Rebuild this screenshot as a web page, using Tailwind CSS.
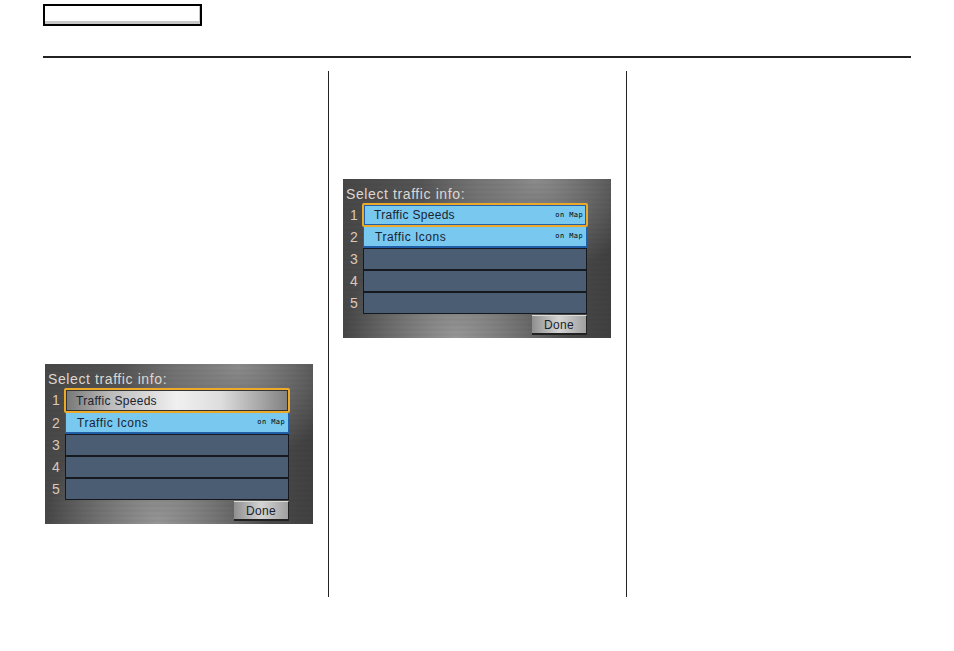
<!DOCTYPE html>
<html lang="en">
  <head>
    <meta charset="UTF-8" />
    <meta name="viewport" content="width=device-width, initial-scale=1.0" />
    <script src="https://cdn.jsdelivr.net/npm/@tailwindcss/browser@4"></script>
    <title>Select traffic info</title>
  </head>

  <body class="bg-white">
    <div class="w-[954px] h-[651px] px-[43px] pt-[4px] overflow-hidden font-['Liberation_Sans',Arial,sans-serif]">
      <div class="w-[159px] h-[22px] border-2 border-black bg-white shadow-[inset_-1px_-3px_0_#c8c8c8]"></div>
      <div class="mt-[30px] w-[868px] h-[2px] bg-[#222]"></div>

      <div class="mt-[13px] flex h-[526px]">
        <!-- left column -->
        <div class="w-[286px] h-full border-r border-[#222] pl-[2px] pt-[293px]">
          <div class="w-[268px] h-[160px] pt-[6px] flex flex-col bg-[repeating-linear-gradient(0deg,#0000_0px,#0000_2px,#0000000c_3px,#0000_5px),radial-gradient(ellipse_at_72%_0%,#8c8c8c_0%,#8c8c8c00_42%),radial-gradient(ellipse_at_42%_100%,#969696_0%,#96969600_50%),linear-gradient(90deg,#474747,#5e5e5e_50%,#404040)]">
            <div class="h-[18px] pl-[3px] text-[#ddd6d0] text-[14px] leading-[18px] tracking-[0.6px]">Select traffic info:</div>
            <div class="ml-[20px] w-[224px] flex flex-col">
              <div class="relative h-[25px] flex items-center">
                <span class="absolute left-[-20px] w-[22px] text-center text-[14px] text-[#dcc8b8]">1</span>
                <div class="h-full w-[226px] -mx-[1px] pl-[10px] flex items-center border-2 border-[#eda928] rounded-[2px] shadow-[inset_0_0_0_1px_#333] bg-[linear-gradient(90deg,#777_0%,#bbb_20%,#f0f0f0_50%,#ddd_70%,#808080_100%)] text-[12px] tracking-[0.3px] text-[#1a2430]">Traffic Speeds</div>
              </div>
              <div class="relative h-[21px] flex items-center">
                <span class="absolute left-[-20px] w-[22px] text-center text-[14px] text-[#dcc8b8]">2</span>
                <div class="h-full w-full pl-[11px] pr-[3px] flex items-center justify-between bg-[#78c8f0] border-x border-b-2 border-[#2160a8] text-[12px] tracking-[0.5px] text-[#1a2430]">Traffic Icons<span class="font-['DejaVu_Sans_Mono',monospace] text-[7px] tracking-[0.4px] text-black">on Map</span></div>
              </div>
              <div class="relative h-[22px] flex items-center">
                <span class="absolute left-[-20px] w-[22px] text-center text-[14px] text-[#dcc8b8]">3</span>
                <div class="h-full w-full bg-[#4a5d73] border border-[#15181c]"></div>
              </div>
              <div class="relative h-[22px] flex items-center">
                <span class="absolute left-[-20px] w-[22px] text-center text-[14px] text-[#dcc8b8]">4</span>
                <div class="h-full w-full bg-[#4a5d73] border border-[#15181c]"></div>
              </div>
              <div class="relative h-[22px] flex items-center">
                <span class="absolute left-[-20px] w-[22px] text-center text-[14px] text-[#dcc8b8]">5</span>
                <div class="h-full w-full bg-[#4a5d73] border border-[#15181c]"></div>
              </div>
            </div>
            <div class="mt-[1px] ml-[189px] w-[55px] h-[20px] flex items-center justify-center bg-[linear-gradient(90deg,#8f8f8f,#d4d4d4_50%,#a0a0a0)] border-t border-t-[#ddd] border-b-2 border-r border-b-[#222] border-r-[#222] text-[12px] tracking-[0.3px] text-[#1a2430]">Done</div>
          </div>
        </div>

        <!-- middle column -->
        <div class="w-[298px] h-full border-r border-[#222] pl-[14px] pt-[108px]">
          <div class="w-[268px] h-[159px] pt-[6px] flex flex-col bg-[repeating-linear-gradient(0deg,#0000_0px,#0000_2px,#0000000c_3px,#0000_5px),radial-gradient(ellipse_at_72%_0%,#8c8c8c_0%,#8c8c8c00_42%),radial-gradient(ellipse_at_42%_100%,#969696_0%,#96969600_50%),linear-gradient(90deg,#474747,#5e5e5e_50%,#404040)]">
            <div class="h-[18px] pl-[3px] text-[#ddd6d0] text-[14px] leading-[18px] tracking-[0.6px]">Select traffic info:</div>
            <div class="ml-[20px] w-[224px] flex flex-col">
              <div class="relative h-[24px] flex items-center">
                <span class="absolute left-[-20px] w-[22px] text-center text-[14px] text-[#dcc8b8]">1</span>
                <div class="h-full w-[226px] -mx-[1px] pl-[10px] pr-[3px] flex items-center justify-between border-2 border-[#eda928] rounded-[2px] shadow-[inset_0_0_0_1px_#2160a8] bg-[#78c8f0] text-[12px] tracking-[0.3px] text-[#1a2430]">Traffic Speeds<span class="font-['DejaVu_Sans_Mono',monospace] text-[7px] tracking-[0.4px] text-black">on Map</span></div>
              </div>
              <div class="relative h-[21px] flex items-center">
                <span class="absolute left-[-20px] w-[22px] text-center text-[14px] text-[#dcc8b8]">2</span>
                <div class="h-full w-full pl-[11px] pr-[3px] flex items-center justify-between bg-[#78c8f0] border-x border-b-2 border-[#2160a8] text-[12px] tracking-[0.5px] text-[#1a2430]">Traffic Icons<span class="font-['DejaVu_Sans_Mono',monospace] text-[7px] tracking-[0.4px] text-black">on Map</span></div>
              </div>
              <div class="relative h-[22px] flex items-center">
                <span class="absolute left-[-20px] w-[22px] text-center text-[14px] text-[#dcc8b8]">3</span>
                <div class="h-full w-full bg-[#4a5d73] border border-[#15181c]"></div>
              </div>
              <div class="relative h-[22px] flex items-center">
                <span class="absolute left-[-20px] w-[22px] text-center text-[14px] text-[#dcc8b8]">4</span>
                <div class="h-full w-full bg-[#4a5d73] border border-[#15181c]"></div>
              </div>
              <div class="relative h-[22px] flex items-center">
                <span class="absolute left-[-20px] w-[22px] text-center text-[14px] text-[#dcc8b8]">5</span>
                <div class="h-full w-full bg-[#4a5d73] border border-[#15181c]"></div>
              </div>
            </div>
            <div class="mt-[1px] ml-[189px] w-[55px] h-[20px] flex items-center justify-center bg-[linear-gradient(90deg,#8f8f8f,#d4d4d4_50%,#a0a0a0)] border-t border-t-[#ddd] border-b-2 border-r border-b-[#222] border-r-[#222] text-[12px] tracking-[0.3px] text-[#1a2430]">Done</div>
          </div>
        </div>
      </div>
    </div>
  </body>
</html>
